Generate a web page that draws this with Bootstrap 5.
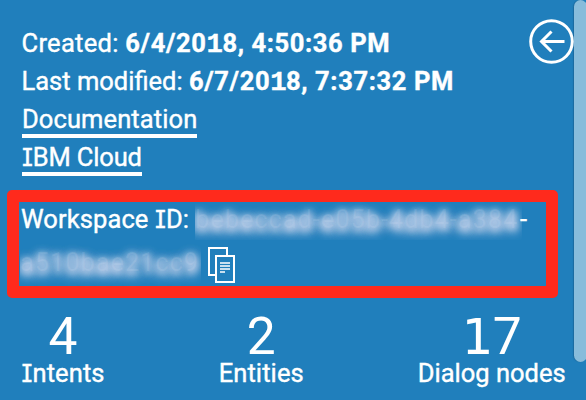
<!DOCTYPE html>
<html lang="en">
<head>
<meta charset="utf-8">
<meta name="viewport" content="width=device-width, initial-scale=1">
<title>Workspace details</title>
<link href="https://cdn.jsdelivr.net/npm/bootstrap@5.3.0/dist/css/bootstrap.min.css" rel="stylesheet">
<style>
body{background:#207fbc;color:#fff;font-family:Roboto,"Noto Sans",sans-serif;font-size:25.5px;line-height:38px;width:586px;height:400px;-webkit-text-stroke:.4px #fff}
.cap-i{font-family:Inter,sans-serif;font-feature-settings:"cv08";font-size:.97em}
.foot-one{font-family:"Liberation Mono",monospace;font-size:1.07em;line-height:1px;letter-spacing:-.5px}
.foot-one-lg{font-family:"DejaVu Sans",sans-serif;font-size:.965em;line-height:1px;letter-spacing:-.5px}
.details{padding:24px 0 0 22px;height:190px}
.details b{font-weight:700;letter-spacing:.62px}
.line{height:38px;margin-left:-.5px}
.plain-link{color:#fff;text-decoration:none;border-bottom:4px solid #fff;line-height:32px;height:35px;margin-top:3px}
.plain-link:hover{color:#fff}
.ls-n{letter-spacing:-.15px}.ls-z{letter-spacing:0}.ls-a{letter-spacing:.1px}.ls-c{letter-spacing:.3px}
.back-btn{right:12px;top:18px;width:45px;height:46px}
.scroll-thumb{right:-1px;top:0;width:13px;height:362px;border-radius:7px;background:#88bcdb;box-shadow:-1px 0 1px #1b6b9f}
.id-box{margin-left:7px;width:551px;height:108px;border:12px solid #ff2a1c;border-radius:5px;padding-left:2px}
.id-row{height:34px;line-height:34px}
.id-row.second{height:51px;line-height:51px}
.masked{overflow:hidden;-webkit-text-stroke:0;color:rgba(225,232,248,.12);text-shadow:0 2px 6px rgba(208,218,240,.75),0 3px 9px #c5d2ec,0 3px 11px #c5d2ec,0 4px 14px rgba(197,210,236,.8);letter-spacing:.9px}
.mask-one{width:327px;margin-left:6px;height:38px}
.mask-two{width:181px;margin-left:-1px;height:44px;line-height:37px;margin-top:8px}
.tail-dash{margin-left:-2px}
.stats{padding:14px 0 0 21.5px;gap:114px}
.stat-value{font-size:51.5px;line-height:50px;-webkit-text-stroke:0}
.stat-label{line-height:24px;margin-top:-1px}
</style>
</head>
<body class="position-relative overflow-hidden m-0">
<section class="details d-flex flex-column align-items-start text-nowrap">
  <div class="line ls-c">Created: <b>6/4/20<span class="foot-one">1</span>8, 4:50:36 PM</b></div>
  <div class="line ls-z">Last modified: <b>6/7/20<span class="foot-one">1</span>8, 7:37:32 PM</b></div>
  <a href="#" class="plain-link ls-a">Documentation</a>
  <a href="#" class="plain-link ls-n"><span class="cap-i">I</span>BM Cloud</a>
</section>
<section class="id-box text-nowrap">
  <div class="id-row d-flex"><span class="ls-a">Workspace <span class="cap-i">I</span>D:</span><span class="masked mask-one">bebeccad-e05b-4db4-a384</span><span class="tail-dash">-</span></div>
  <div class="id-row second d-flex"><span class="masked mask-two">a510bae21cc9</span>
    <svg class="copy-icon mt-2" width="30" height="41" viewBox="-6 0 30 41" fill="none" stroke="#fff" stroke-width="2" overflow="visible"><path d="M8 31H2V4h18v7"/><path d="M9 12h18v26H9z"/><path d="M13 19h10M13 22h10M13 25h10M13 28h5" stroke-width="1.3"/></svg>
  </div>
</section>
<section class="stats d-flex text-center text-nowrap">
  <div><div class="stat-value">4</div><div class="stat-label ls-a"><span class="cap-i">I</span>ntents</div></div>
  <div><div class="stat-value">2</div><div class="stat-label ls-a">Entities</div></div>
  <div><div class="stat-value"><span class="foot-one-lg">1</span>7</div><div class="stat-label ls-z">Dialog nodes</div></div>
</section>
<div class="scroll-thumb position-absolute"></div>
<svg class="back-btn position-absolute" viewBox="0 0 45 46" fill="none" stroke="#fff" stroke-width="3"><circle cx="22.5" cy="23.5" r="20.8"/><path d="M35.5 23.5H12M22.5 13.5l-10 10 10 10"/></svg>
<script src="https://cdn.jsdelivr.net/npm/bootstrap@5.3.0/dist/js/bootstrap.bundle.min.js"></script>
</body>
</html>
